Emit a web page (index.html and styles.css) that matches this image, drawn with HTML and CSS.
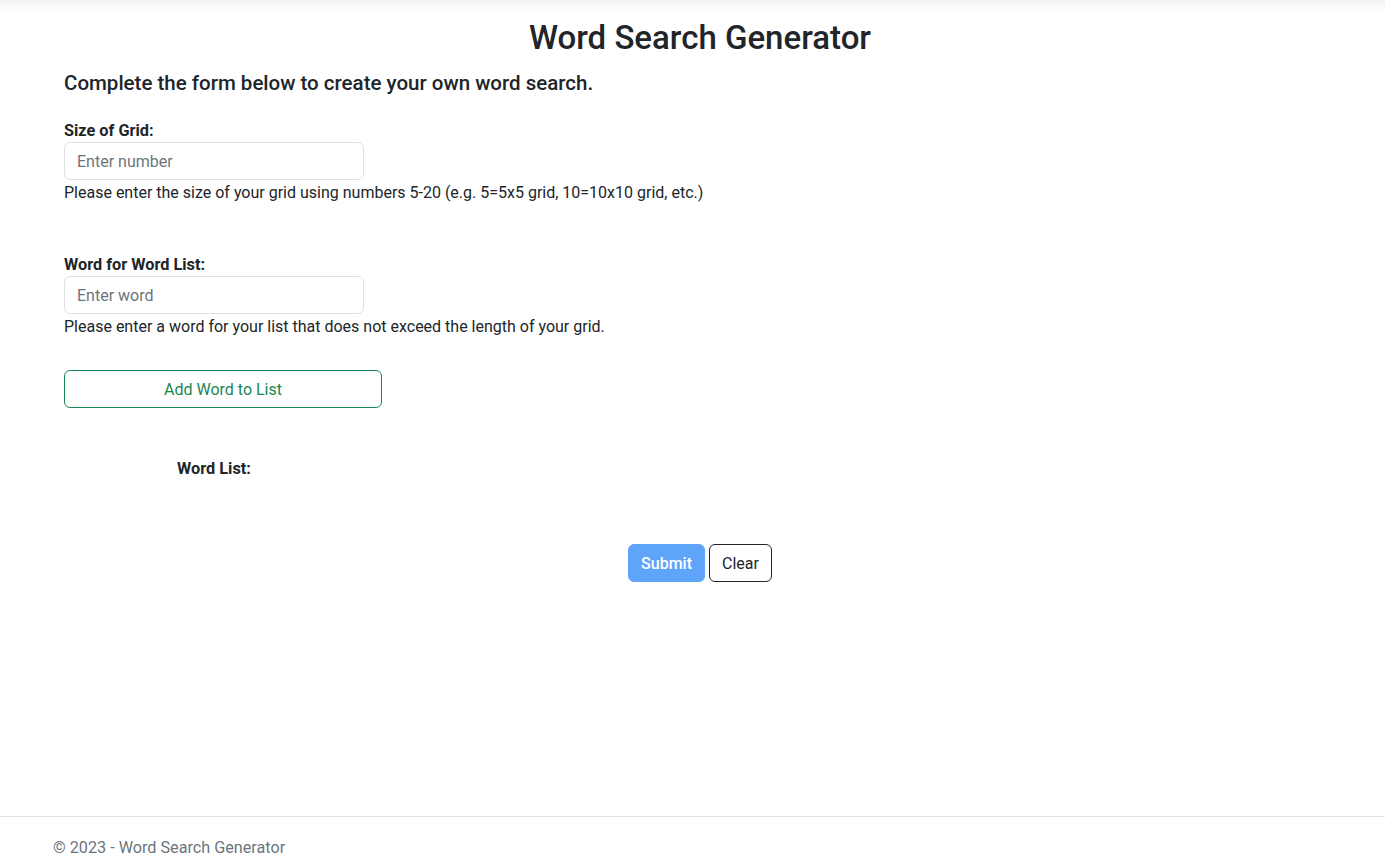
FILE: index.html
```html
<!DOCTYPE html>
<html lang="en">
<head>
<meta charset="utf-8">
<title>Word Search Generator</title>
<link rel="stylesheet" href="styles.css">
</head>
<body>
<div class="page">
  <div class="top-shade"></div>
  <main class="container">
    <h1 class="title">Word Search Generator</h1>
    <h5 class="intro">Complete the form below to create your own word search.</h5>

    <div class="field">
      <label class="label" for="size">Size of Grid:</label>
      <input class="input" id="size" type="text" placeholder="Enter number">
      <div class="help">Please enter the size of your grid using numbers 5-20 (e.g. 5=5x5 grid, 10=10x10 grid, etc.)</div>
    </div>

    <div class="field field-second">
      <label class="label" for="word">Word for Word List:</label>
      <input class="input" id="word" type="text" placeholder="Enter word">
      <div class="help">Please enter a word for your list that does not exceed the length of your grid.</div>
    </div>

    <button class="btn btn-add" type="button">Add Word to List</button>

    <div class="word-list">
      <span class="word-list-title">Word List:</span>
    </div>

    <div class="actions">
      <button class="btn btn-submit" type="button" disabled>Submit</button>
      <button class="btn btn-clear" type="button">Clear</button>
    </div>
  </main>

  <footer class="footer">
    <div class="footer-inner">&copy; 2023 - Word Search Generator</div>
  </footer>
</div>
</body>
</html>
```
FILE: styles.css
```css
* { box-sizing: border-box; }

html, body {
  margin: 0;
  padding: 0;
}

body {
  font-family: Roboto, "Liberation Sans", sans-serif;
  font-size: 16px;
  line-height: 24px;
  color: #212529;
  background: #ffffff;
}

.page {
  min-height: 100vh;
  display: flex;
  flex-direction: column;
  overflow: hidden;
}

.top-shade {
  height: 14px;
  background: linear-gradient(to bottom, #f3f3f3 0%, #fbfbfb 50%, #ffffff 100%);
}

.container {
  width: 1296px;
  margin-left: 52px;
  padding: 0 12px;
  display: flex;
  flex-direction: column;
  align-items: flex-start;
}

.title {
  align-self: stretch;
  text-align: center;
  margin: 4px 0 0;
  padding-top: 1px;
  font-size: 33px;
  line-height: 37px;
  font-weight: 500;
}

.intro {
  margin: 15px 0 0;
  padding-top: 1px;
  font-size: 20.5px;
  line-height: 23px;
  font-weight: 500;
}

.field {
  margin-top: 23px;
  display: flex;
  flex-direction: column;
  align-items: flex-start;
}

.field-second {
  margin-top: 48px;
}

.label {
  font-weight: 700;
  font-size: 16.3px;
  line-height: 23px;
  padding-top: 1px;
}

.input {
  width: 300px;
  height: 38px;
  padding: 6px 12px;
  font-family: inherit;
  font-size: 16px;
  line-height: 24px;
  color: #212529;
  border: 1px solid #dee2e6;
  border-radius: 6px;
  background: #fff;
  outline: none;
}

.input::placeholder {
  color: #6c757d;
  opacity: 1;
}

.help {
  font-size: 16px;
  line-height: 23px;
  padding-top: 1px;
}

.btn {
  font-family: inherit;
  font-size: 16px;
  line-height: 24px;
  padding: 7px 12px 5px;
  border-radius: 6px;
  background: transparent;
  cursor: pointer;
  height: 38px;
}

.btn-add {
  margin-top: 32px;
  width: 318px;
  border: 1px solid #198754;
  color: #198754;
}

.word-list {
  margin-top: 48px;
  width: 300px;
  text-align: center;
  line-height: 23px;
  padding-top: 1px;
}

.word-list-title {
  font-weight: 700;
  font-size: 16.3px;
}

.actions {
  align-self: stretch;
  margin-top: 64px;
  display: flex;
  justify-content: center;
  gap: 4px;
}

.btn-submit {
  background: #5ea4f9;
  border: 1px solid #5ea4f9;
  color: #ffffff;
  font-weight: 500;
  cursor: default;
}

.btn-clear {
  border: 1px solid #212529;
  color: #212529;
}

.footer {
  margin-top: auto;
  height: 52px;
  border-top: 1px solid #dee2e6;
  overflow: hidden;
}

.footer-inner {
  padding-left: 53px;
  padding-top: 1px;
  line-height: 60px;
  font-size: 16.2px;
  color: #6c757d;
  white-space: nowrap;
}
```
